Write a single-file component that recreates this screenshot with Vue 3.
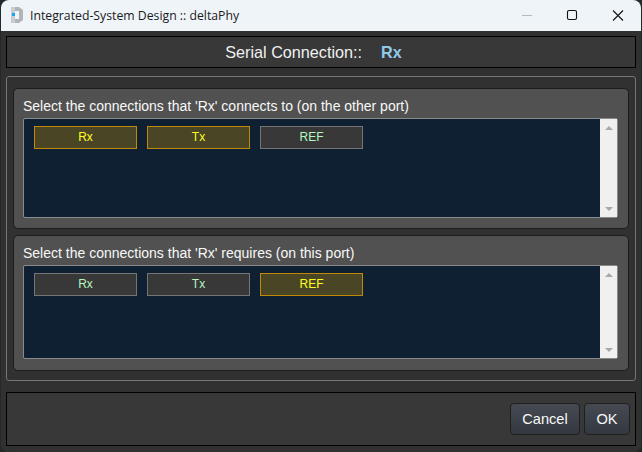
<template>
  <div class="window">
    <div class="titlebar">
      <svg class="logo" width="12" height="16" viewBox="0 0 12 16">
        <path d="M4 0h4l4 3v10l-4 3H4v-4h4V4H4z" fill="#b1b5b8"/>
        <path d="M0 0h4v16H0z" fill="#c9cdd0"/>
        <rect x="1" y="6" width="3" height="3" fill="#1ea0f5"/>
      </svg>
      <span class="title">Integrated-System Design :: deltaPhy</span>
      <div class="controls">
        <svg class="ctl" width="46" height="31" viewBox="0 0 46 31"><path d="M19 15.500h10" stroke="#b5b8bc" stroke-width="1"/></svg>
        <svg class="ctl" width="46" height="31" viewBox="0 0 46 31"><rect x="18.500" y="10.500" width="9" height="9" rx="1.500" fill="none" stroke="#111" stroke-width="1.100"/></svg>
        <svg class="ctl" width="46" height="31" viewBox="0 0 46 31"><path d="M18 10.500l10 10M28 10.500l-10 10" stroke="#111" stroke-width="1.100"/></svg>
      </div>
    </div>
    <div class="body">
      <div class="header">
        <span>Serial Connection::</span><span class="accent">Rx</span>
      </div>
      <div class="group">
        <section v-for="p in panels" :key="p.label" class="panel">
          <div class="label">{{ p.label }}</div>
          <div class="list" :class="p.cls">
            <div class="chips">
              <div v-for="c in p.chips" :key="c.t" class="chip" :class="{ on: c.on }">{{ c.t }}</div>
            </div>
            <div class="scroll">
              <svg width="8" height="4" viewBox="0 0 8 4"><path d="M4 0L8 4H0z" fill="#a8a8a8"/></svg>
              <svg width="8" height="4" viewBox="0 0 8 4"><path d="M0 0h8L4 4z" fill="#a8a8a8"/></svg>
            </div>
          </div>
        </section>
      </div>
      <div class="footer">
        <button class="btn cancel">Cancel</button>
        <button class="btn ok">OK</button>
      </div>
    </div>
  </div>
</template>

<script setup>
const panels = [
  {
    label: "Select the connections that 'Rx' connects to (on the other port)",
    cls: 'first',
    chips: [
      { t: 'Rx', on: true },
      { t: 'Tx', on: true },
      { t: 'REF', on: false }
    ]
  },
  {
    label: "Select the connections that 'Rx' requires (on this port)",
    cls: 'second',
    chips: [
      { t: 'Rx', on: false },
      { t: 'Tx', on: false },
      { t: 'REF', on: true }
    ]
  }
]
</script>

<style>
html, body { margin: 0; background: #23282c; overflow: hidden; }
</style>

<style scoped>
.window {
  width: 640px;
  height: 452px;
  margin-left: 1px;
  box-sizing: border-box;
  border-radius: 8px;
  overflow: hidden;
  background: #333333;
  display: flex;
  flex-direction: column;
  font-family: "Liberation Sans", Arial, sans-serif;
}
.titlebar {
  height: 31px;
  flex: none;
  background: #eff4f9;
  display: flex;
  align-items: center;
  padding-left: 10px;
}
.logo { flex: none; margin-right: 7px; margin-top: -1px; }
.title {
  font: 12.250px "Open Sans", "Noto Sans", sans-serif;
  color: #1a1a1a;
  white-space: nowrap;
}
.controls { margin-left: auto; display: flex; }
.ctl { display: block; }
.body {
  flex: 1;
  display: flex;
  flex-direction: column;
  padding: 5px 5px 6px;
  background: #313131;
}
.header {
  height: 32px;
  box-sizing: border-box;
  flex: none;
  border: 1px solid #000;
  background: #383838;
  display: flex;
  align-items: center;
  justify-content: center;
  gap: 19px;
  color: #f0f0f0;
  font-size: 16.200px;
  padding-right: 15px;
}
.accent { color: #8fcbe9; font-weight: bold; }
.group {
  margin-top: 8px;
  height: 305px;
  flex: none;
  box-sizing: border-box;
  border: 1px solid #757575;
  border-radius: 3px;
  padding: 11px 6px 9px;
  display: flex;
  flex-direction: column;
  gap: 6px;
}
.panel {
  flex: none;
  box-sizing: border-box;
  border: 1px solid #1c1c1c;
  border-radius: 5px;
  background: #515151;
  padding: 0 10px 10px 9px;
}
.panel:first-child { height: 141px; }
.panel:last-child { height: 136px; }
.label {
  color: #f8f8f8;
  font-size: 14px;
  line-height: 16px;
  padding-top: 9px;
  height: 20px;
  white-space: nowrap;
}
.list {
  box-sizing: border-box;
  border: 1px solid #8a8a8a;
  border-radius: 2px;
  background: #0f2032;
  display: flex;
  justify-content: space-between;
}
.list.first { height: 100px; }
.list.second { height: 94px; }
.chips {
  display: flex;
  gap: 10px;
  padding: 7px 0 0 10px;
  align-items: flex-start;
}
.chip {
  width: 103px;
  height: 23px;
  box-sizing: border-box;
  border: 1px solid #757575;
  background: #383838;
  color: #b4f5c0;
  font-size: 12px;
  line-height: 21px;
  text-align: center;
}
.chip.on {
  border-color: #c08a08;
  background: #4a4525;
  color: #ffff20;
}
.scroll {
  width: 17px;
  background: #f0f0f0;
  display: flex;
  flex-direction: column;
  justify-content: space-between;
  align-items: center;
  padding: 7px 0 6px;
  box-sizing: border-box;
}
.scroll svg { display: block; }
.footer {
  margin-top: 11px;
  height: 54px;
  flex: none;
  box-sizing: border-box;
  border: 1px solid #000;
  background: #383838;
  display: flex;
  justify-content: flex-end;
  align-items: center;
  gap: 4px;
  padding-right: 5px;
}
.btn {
  height: 32px;
  box-sizing: border-box;
  border: 1px solid #1f1f1f;
  border-radius: 4px;
  background: linear-gradient(#454a52, #343840);
  color: #f8f8f8;
  font: 14.600px "Liberation Sans", Arial, sans-serif;
  padding: 0;
}
.cancel { width: 70px; }
.ok { width: 46px; }
</style>
